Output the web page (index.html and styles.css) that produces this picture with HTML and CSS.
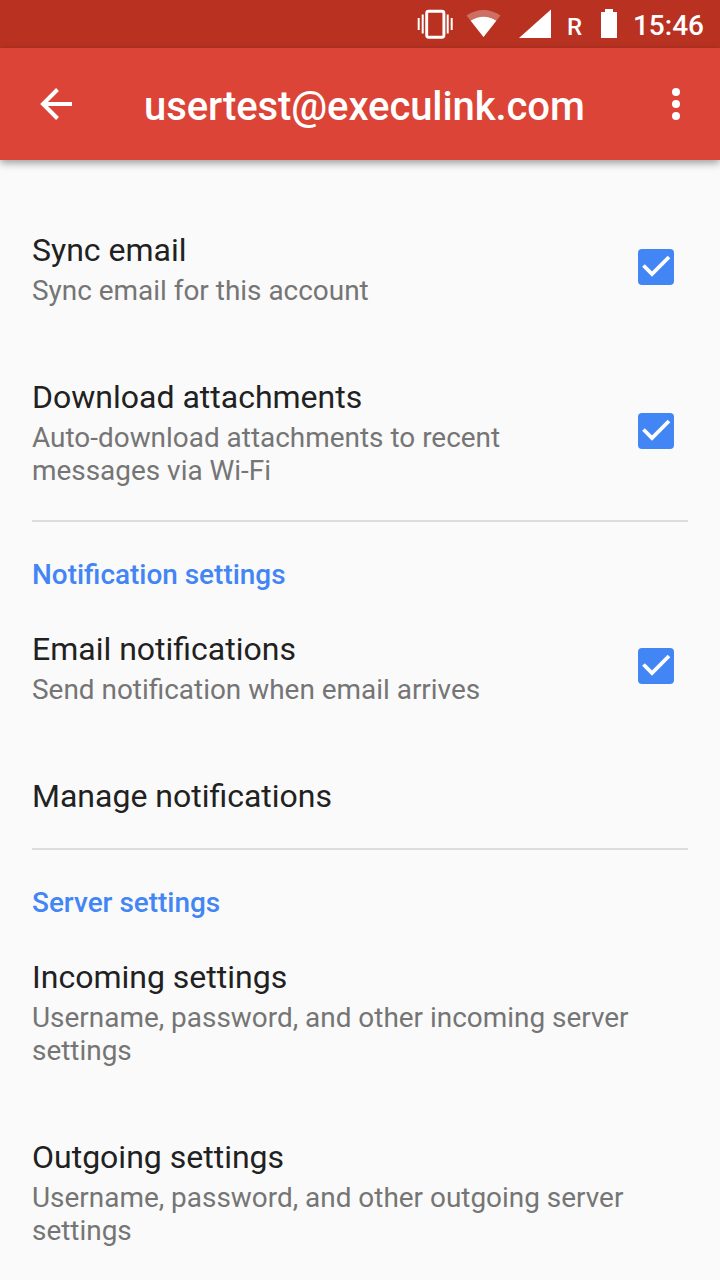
FILE: index.html
```html
<!DOCTYPE html>
<html lang="en">
<head>
<meta charset="utf-8">
<title>Account settings</title>
<link rel="stylesheet" href="styles.css">
</head>
<body>
<div class="status-bar">
  <svg class="status-icons" width="220" height="48" viewBox="0 0 220 48" fill="#fff">
    <rect x="26.700" y="11.200" width="17.200" height="26" rx="2" fill="none" stroke="#fff" stroke-width="2.900"/>
    <path d="M17.700 18h2v12h-2zM21.700 14.500h2v19h-2zM46.700 14.500h2v19h-2zM50.700 18h2v12h-2z"/>
    <path d="M66.500 15.500Q83.500 4.500 100.500 15.500L83.500 37z" opacity=".3"/>
    <path d="M70.700 20.700Q83.500 13 96.300 20.700L83.500 37z"/>
    <path d="M119 38L151 9.500V38z"/>
    <path d="M205 9h8v3h4v26h-16V12h4z"/>
  </svg>
  <span class="roaming">R</span>
  <span class="clock">15:46</span>
</div>
<header class="app-bar">
  <svg class="back" width="32" height="32" viewBox="0 0 32 32" fill="none" stroke="#fff" stroke-width="4"><path d="M32 16H3M17.500 1.500L3 16l14.500 14.500"/></svg>
  <h1 class="account">usertest@execulink.com</h1>
  <svg class="more" width="8" height="32" viewBox="0 0 8 32" fill="#fff"><circle cx="4" cy="4" r="4"/><circle cx="4" cy="16" r="4"/><circle cx="4" cy="28" r="4"/></svg>
</header>
<main class="settings">
  <div class="row">
    <div class="text"><div class="title">Sync email</div><div class="summary">Sync email for this account</div></div>
    <svg class="check" width="36" height="36" viewBox="0 0 36 36"><rect width="36" height="36" rx="4" fill="#4285f4"/><path d="M5.500 16.500L14 25 31 8" fill="none" stroke="#fff" stroke-width="3.800"/></svg>
  </div>
  <div class="row">
    <div class="text"><div class="title">Download attachments</div><div class="summary">Auto-download attachments to recent messages via Wi-Fi</div></div>
    <svg class="check" width="36" height="36" viewBox="0 0 36 36"><rect width="36" height="36" rx="4" fill="#4285f4"/><path d="M5.500 16.500L14 25 31 8" fill="none" stroke="#fff" stroke-width="3.800"/></svg>
  </div>
  <h2 class="section">Notification settings</h2>
  <div class="row">
    <div class="text"><div class="title">Email notifications</div><div class="summary">Send notification when email arrives</div></div>
    <svg class="check" width="36" height="36" viewBox="0 0 36 36"><rect width="36" height="36" rx="4" fill="#4285f4"/><path d="M5.500 16.500L14 25 31 8" fill="none" stroke="#fff" stroke-width="3.800"/></svg>
  </div>
  <div class="row row-single">
    <div class="text"><div class="title">Manage notifications</div></div>
  </div>
  <h2 class="section">Server settings</h2>
  <div class="row">
    <div class="text"><div class="title">Incoming settings</div><div class="summary">Username, password, and other incoming server settings</div></div>
  </div>
  <div class="row">
    <div class="text"><div class="title">Outgoing settings</div><div class="summary">Username, password, and other outgoing server settings</div></div>
  </div>
</main>
</body>
</html>
```
FILE: styles.css
```css
* { box-sizing: border-box; }
body {
  margin: 0;
  width: 720px;
  height: 1280px;
  overflow: hidden;
  display: flex;
  flex-direction: column;
  background: #fafafa;
  font-family: Roboto, sans-serif;
}
.status-bar {
  flex: none;
  display: grid;
  grid-template-columns: 720px;
  height: 48px;
  background: #b93221;
  color: #fff;
}
.status-bar > * { grid-area: 1 / 1; }
.status-icons { margin-left: 400px; }
.roaming {
  margin-left: 567px;
  font-size: 24px;
  font-weight: 500;
  line-height: 54px;
}
.clock {
  justify-self: end;
  margin-right: 16px;
  font-size: 28px;
  font-weight: 500;
  line-height: 52px;
}
.app-bar {
  flex: none;
  display: flex;
  align-items: center;
  height: 112px;
  padding: 0 40px;
  background: #db4437;
  box-shadow: 0 3px 8px rgba(0, 0, 0, .38);
}
.account {
  flex: 1;
  margin: 5px 0 0 72px;
  color: #fff;
  font-size: 40px;
  font-weight: 500;
  letter-spacing: -0.09px;
  line-height: 48px;
}
.settings {
  flex: none;
  padding-top: 33px;
}
.row {
  display: flex;
  align-items: center;
  justify-content: space-between;
  padding: 34px 46px 33px 32px;
}
.row-single {
  height: 109px;
  align-items: flex-start;
}
.text { max-width: 624px; }
.row:has(.check) .text { max-width: 540px; }
.title {
  margin-bottom: 1px;
  color: #212121;
  font-size: 32px;
  line-height: 46px;
}
.summary {
  color: #757575;
  font-size: 27.93px;
  line-height: 33px;
}
.check { flex: none; }
.section {
  height: 72px;
  margin: 0 32px;
  padding-top: 36px;
  border-top: 2px solid #dcdcdc;
  color: #4285f4;
  font-size: 27.93px;
  font-weight: 500;
  line-height: 33px;
}
```
